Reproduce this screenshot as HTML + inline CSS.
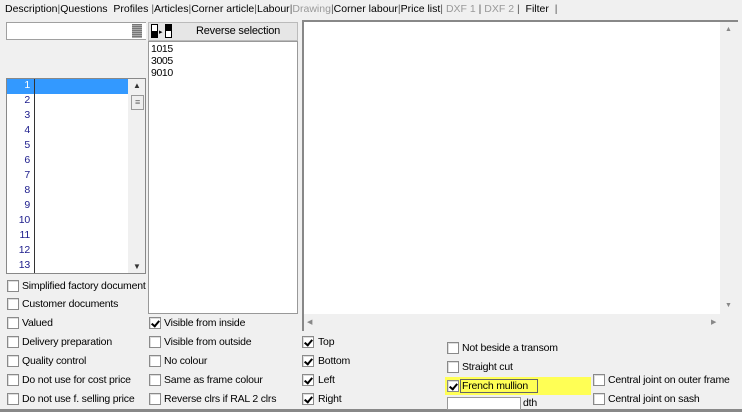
<!DOCTYPE html><html><head><style>
*{box-sizing:border-box;margin:0;padding:0}
body{width:742px;height:412px;background:#f0f0f0;font-family:"Liberation Sans",Arial,sans-serif;font-size:10.5px;letter-spacing:-0.2px;color:#000;position:relative;overflow:hidden}
.a{position:absolute;white-space:nowrap}
.cb{position:absolute;width:12px;height:12px;border:1px solid #8a8a8a;background:#fff;box-shadow:inset 1px 1px 0 #ddd}
.cb.k::after{content:"";position:absolute;left:3px;top:1px;width:3px;height:6px;border:solid #000;border-width:0 2px 2px 0;transform:rotate(40deg)}
.t{position:absolute;white-space:nowrap;line-height:13px}
.w{position:absolute;background:#fff}
.n{position:absolute;left:0;width:24px;text-align:right;color:#1c1c8c;line-height:15px}
</style></head><body>
<div class="a" style="top:0;height:18px;line-height:18px;left:5px;letter-spacing:0">Description<span style="color:#555">|</span>Questions&nbsp; Profiles <span style="color:#555">|</span>Articles<span style="color:#555">|</span>Corner article<span style="color:#555">|</span>Labour<span style="color:#555">|</span><span style="color:#999">Drawing</span><span style="color:#555">|</span>Corner labour<span style="color:#555">|</span>Price list<span style="color:#555">|</span> <span style="color:#999">DXF 1</span> <span style="color:#555">|</span> <span style="color:#999">DXF 2</span> <span style="color:#555">|</span>&nbsp; Filter&nbsp; <span style="color:#555">|</span></div>
<div class="w" style="left:6px;top:22px;width:140px;height:18px;border:1px solid #a0a0a0;border-right:none"></div>
<div class="a" style="left:132px;top:24px;width:10px;height:14px;background:repeating-linear-gradient(#777 0 1px,#aaa 1px 2px)"></div>
<div class="w" style="left:6px;top:78px;width:140px;height:196px;border:1px solid #888;overflow:hidden">
<div class="a" style="left:0;top:0;width:121px;height:15px;background:#3399ff"></div>
<div class="a" style="left:27px;top:0;width:1px;height:196px;background:#333"></div>
<div class="a" style="left:121px;top:0;width:18px;height:196px;background:#f0f0f0"></div>
<div class="a" style="left:126px;top:2px;font-size:8px;color:#333">▲</div>
<div class="a" style="left:124px;top:16px;width:13px;height:15px;border:1px solid #999;background:#eee;font-size:9px;text-align:center;line-height:13px;color:#666">≡</div>
<div class="a" style="left:126px;top:183px;font-size:8px;color:#333">▼</div>
</div>
<div style="position:absolute;left:6px;top:78px">
<div class="n" style="top:0;color:#fff">1</div><div class="n" style="top:15px">2</div><div class="n" style="top:30px">3</div><div class="n" style="top:45px">4</div><div class="n" style="top:60px">5</div><div class="n" style="top:75px">6</div><div class="n" style="top:90px">7</div><div class="n" style="top:105px">8</div><div class="n" style="top:120px">9</div><div class="n" style="top:135px">10</div><div class="n" style="top:150px">11</div><div class="n" style="top:165px">12</div><div class="n" style="top:180px">13</div>
</div>
<div class="a" style="left:148px;top:22px;width:150px;height:19px;background:#e6e6e6;border:1px solid #bbb"></div>
<div class="a" style="left:151px;top:24px;width:7px;height:14px;border:1px solid #000;background:linear-gradient(#fff 50%,#000 50%)"></div>
<div class="a" style="left:159px;top:28px;font-size:7px">▸</div>
<div class="a" style="left:165px;top:24px;width:7px;height:14px;border:1px solid #000;background:linear-gradient(#000 50%,#fff 50%)"></div>
<div class="a" style="left:196px;top:25px;font-size:11px">Reverse selection</div>
<div class="w" style="left:148px;top:41px;width:150px;height:273px;border:1px solid #999"></div>
<div class="a" style="left:151px;top:43px;line-height:12px;font-size:10.5px;letter-spacing:-0.4px">1015<br>3005<br>9010</div>
<div class="w" style="left:302px;top:20px;width:436px;height:311px;border-top:2px solid #888;border-left:2px solid #888"></div>
<div class="a" style="left:720px;top:22px;width:18px;height:292px;background:#f0f0f0"></div>
<div class="a" style="left:725px;top:26px;font-size:7px;color:#888">▲</div>
<div class="a" style="left:725px;top:302px;font-size:7px;color:#888">▼</div>
<div class="a" style="left:304px;top:314px;width:434px;height:17px;background:#f0f0f0"></div>
<div class="a" style="left:307px;top:318px;font-size:7px;color:#888">◀</div>
<div class="a" style="left:711px;top:318px;font-size:7px;color:#888">▶</div>
<div class="a" style="left:0;top:409px;width:742px;height:3px;background:#888"></div>
<div class="a" style="left:445px;top:377px;width:146px;height:18px;background:#ffff55"></div>
<div class="a" style="left:460px;top:379px;width:78px;height:14px;border:1px solid #666"></div>
<div class="cb" style="left:7px;top:280px"></div><div class="t" style="left:22px;top:280px">Simplified factory document</div>
<div class="cb" style="left:7px;top:298px"></div><div class="t" style="left:22px;top:298px">Customer documents</div>
<div class="cb" style="left:7px;top:317px"></div><div class="t" style="left:22px;top:317px">Valued</div>
<div class="cb" style="left:7px;top:336px"></div><div class="t" style="left:22px;top:336px">Delivery preparation</div>
<div class="cb" style="left:7px;top:355px"></div><div class="t" style="left:22px;top:355px">Quality control</div>
<div class="cb" style="left:7px;top:374px"></div><div class="t" style="left:22px;top:374px">Do not use for cost price</div>
<div class="cb" style="left:7px;top:393px"></div><div class="t" style="left:22px;top:393px">Do not use f. selling price</div>
<div class="cb k" style="left:149px;top:317px"></div><div class="t" style="left:164px;top:317px">Visible from inside</div>
<div class="cb" style="left:149px;top:336px"></div><div class="t" style="left:164px;top:336px">Visible from outside</div>
<div class="cb" style="left:149px;top:355px"></div><div class="t" style="left:164px;top:355px">No colour</div>
<div class="cb" style="left:149px;top:374px"></div><div class="t" style="left:164px;top:374px">Same as frame colour</div>
<div class="cb" style="left:149px;top:393px"></div><div class="t" style="left:164px;top:393px">Reverse clrs if RAL 2 clrs</div>
<div class="cb k" style="left:302px;top:336px"></div><div class="t" style="left:318px;top:336px">Top</div>
<div class="cb k" style="left:302px;top:355px"></div><div class="t" style="left:318px;top:355px">Bottom</div>
<div class="cb k" style="left:302px;top:374px"></div><div class="t" style="left:318px;top:374px">Left</div>
<div class="cb k" style="left:302px;top:393px"></div><div class="t" style="left:318px;top:393px">Right</div>
<div class="cb" style="left:447px;top:342px"></div><div class="t" style="left:462px;top:342px">Not beside a transom</div>
<div class="cb" style="left:447px;top:361px"></div><div class="t" style="left:462px;top:361px">Straight cut</div>
<div class="cb k" style="left:447px;top:380px"></div><div class="t" style="left:462px;top:380px">French mullion</div>
<div class="w" style="left:447px;top:397px;width:74px;height:13px;border:1px solid #999"></div><div class="t" style="left:523px;top:397px">dth</div>
<div class="cb" style="left:593px;top:374px"></div><div class="t" style="left:608px;top:374px">Central joint on outer frame</div>
<div class="cb" style="left:593px;top:393px"></div><div class="t" style="left:608px;top:393px">Central joint on sash</div>
</body></html>
